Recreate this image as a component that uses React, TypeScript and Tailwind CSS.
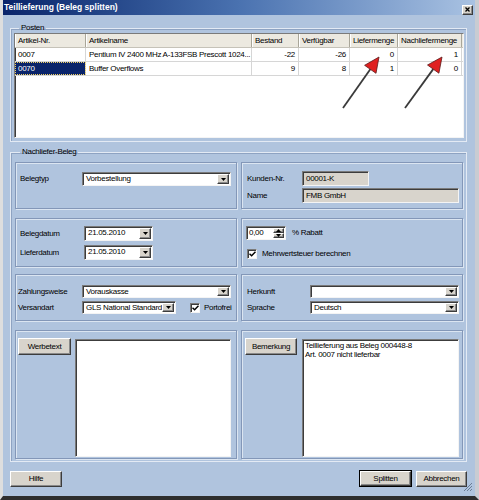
import React from "react";

const sunken =
  "border border-t-[#7a7a7a] border-l-[#7a7a7a] border-b-[#f4f4f4] border-r-[#f4f4f4] shadow-[inset_1px_1px_0_#3c3c3c]";
const raised =
  "bg-[#d8d4cc] border border-t-[#ffffff] border-l-[#ffffff] border-b-[#3c3c3c] border-r-[#3c3c3c] shadow-[inset_-1px_-1px_0_#8a8a8a]";
const panel =
  "border border-[#8397b8] shadow-[inset_1px_1px_0_#dbe5f1,1px_1px_0_#dbe5f1]";

function DropBtn() {
  return (
    <div className={`${raised} w-[12px] my-[1px] mr-[1px] flex items-center justify-center`}>
      <svg width="5" height="3" viewBox="0 0 5 3">
        <path d="M0 0H5L2.5 3Z" fill="#000" />
      </svg>
    </div>
  );
}

function Combo({ className, value }: { className: string; value?: string }) {
  return (
    <div className={`${sunken} bg-white flex items-stretch ${className}`}>
      <span className="flex-1 pl-[3px] leading-[12px] whitespace-nowrap overflow-hidden">{value}</span>
      <DropBtn />
    </div>
  );
}

function Check({ className }: { className?: string }) {
  return (
    <div className={`${sunken} bg-white w-[10px] h-[10px] flex items-center justify-center ${className ?? ""}`}>
      <svg width="7" height="6" viewBox="0 0 7 6">
        <path d="M0.5 2.8L2.6 4.8L6.5 0.8" stroke="#000" strokeWidth="1.5" fill="none" />
      </svg>
    </div>
  );
}

function Btn({ children, className }: { children: React.ReactNode; className: string }) {
  return (
    <div className={`${raised} flex items-center justify-center leading-none ${className}`}>{children}</div>
  );
}

const cols = [
  { w: "w-[71px]", h: "Artikel-Nr.", right: false },
  { w: "w-[166px]", h: "Artikelname", right: false },
  { w: "w-[47px]", h: "Bestand", right: true },
  { w: "w-[51px]", h: "Verfügbar", right: true },
  { w: "w-[48px]", h: "Liefermenge", right: true },
  { w: "w-[64px]", h: "Nachliefermenge", right: true },
];

const rows = [
  ["0007", "Pentium IV 2400 MHz A-133FSB Prescott 1024...", "-22", "-26", "0", "1"],
  ["0070", "Buffer Overflows", "9", "8", "1", "0"],
];

export default function App() {
  return (
    <div className="relative w-[479px] h-[500px] overflow-hidden bg-[#d4d0c8] font-['Liberation_Sans',Arial,sans-serif] text-[8px] tracking-[-0.3px] text-black">
      <div className="flex flex-col w-[479px] h-[500px] border-l-[3px] border-l-[#dedede] border-r-[4px] border-r-[#c9ccd2] border-b-[4px] border-b-[#2e2e2e] bg-[#b0c4de]">
        {/* Title bar */}
        <div className="h-[15px] flex items-center justify-between bg-gradient-to-r from-[#0a246a] via-[#4a72b0] to-[#a9c2e2] pl-[1px] pr-[2px]">
          <span className="text-white font-bold text-[8.5px] tracking-[0px]">Teillieferung (Beleg splitten)</span>
          <div className={`${raised} w-[11px] h-[10px] mt-[4px] flex items-center justify-center`}>
            <svg width="5" height="5" viewBox="0 0 5 5">
              <path d="M0.5 0.5L4.5 4.5M4.5 0.5L0.5 4.5" stroke="#000" strokeWidth="1.3" />
            </svg>
          </div>
        </div>

        <div className="flex flex-col pl-[7px] pr-[8px]">
          {/* Posten */}
          <fieldset className="mt-[8px] border border-[#e3eaf4] shadow-[inset_1px_1px_0_#8ea3c2] px-[3px] pb-[3px] pr-[2px]">
            <legend className="ml-[5px] px-[2px] leading-[10px]">Posten</legend>
            <div className={`h-[105px] bg-white ${sunken}`}>
              <div className="flex h-[14px] bg-[#ece9e0] border-b border-[#c5c2b8]">
                {cols.map((c) => (
                  <div
                    key={c.h}
                    className={`${c.w} flex items-center pl-[3px] border-r border-r-[#a9a699] shadow-[inset_1px_0_0_#ffffff] whitespace-nowrap overflow-hidden`}
                  >
                    {c.h}
                  </div>
                ))}
              </div>
              {rows.map((r, ri) => (
                <div key={ri} className="flex h-[14px] border-b border-[#d6d6d6]">
                  {r.map((v, ci) => {
                    const c = cols[ci];
                    const sel = ri === 1 && ci === 0;
                    return (
                      <div
                        key={ci}
                        className={`${c.w} flex items-center border-r border-r-[#d6d6d6] whitespace-nowrap overflow-hidden ${
                          c.right ? "justify-end pr-[3px]" : "pl-[3px]"
                        } ${sel ? "bg-[#0a246a] text-white outline-1 outline-dotted outline-[#f0d060] -outline-offset-1" : ""}`}
                      >
                        {v}
                      </div>
                    );
                  })}
                </div>
              ))}
            </div>
          </fieldset>

          {/* Nachliefer-Beleg */}
          <fieldset className="mt-[5px] border border-[#e3eaf4] shadow-[inset_1px_1px_0_#8ea3c2] pl-[4px] pr-[3px] pb-[2px]">
            <legend className="ml-[5px] px-[2px] leading-[10px]">Nachliefer-Beleg</legend>
            <div className="mt-[5px] grid grid-cols-[222px_222px] gap-x-[4px]">
              {/* Row 1 */}
              <div className={`${panel} h-[47px] pl-[4px] pt-[9px]`}>
                <div className="flex items-center">
                  <span className="w-[62px]">Belegtyp</span>
                  <Combo className="w-[149px] h-[14px]" value="Vorbestellung" />
                </div>
              </div>
              <div className={`${panel} h-[47px] pl-[5px] pt-[8px] flex flex-col gap-[2px]`}>
                <div className="flex items-center">
                  <span className="w-[55px]">Kunden-Nr.</span>
                  <div className={`${sunken} bg-[#d8d4cc] w-[67px] h-[15px] pl-[3px] leading-[13px]`}>00001-K</div>
                </div>
                <div className="flex items-center">
                  <span className="w-[55px]">Name</span>
                  <div className={`${sunken} bg-[#d8d4cc] w-[157px] h-[15px] pl-[3px] leading-[13px]`}>FMB GmbH</div>
                </div>
              </div>

              {/* Row 2 */}
              <div className={`${panel} mt-[9px] h-[49px] pl-[4px] pt-[7px] flex flex-col gap-[4px]`}>
                <div className="flex items-center">
                  <span className="w-[64px]">Belegdatum</span>
                  <Combo className="w-[69px] h-[15px]" value="21.05.2010" />
                </div>
                <div className="flex items-center">
                  <span className="w-[64px]">Lieferdatum</span>
                  <Combo className="w-[69px] h-[15px]" value="21.05.2010" />
                </div>
              </div>
              <div className={`${panel} mt-[9px] h-[49px] pl-[4px] pt-[7px] flex flex-col gap-[8px]`}>
                <div className="flex items-center">
                  <div className={`${sunken} bg-white w-[40px] h-[14px] flex items-stretch`}>
                    <span className="flex-1 pl-[2px] leading-[12px]">0,00</span>
                    <div className="w-[11px] flex flex-col my-[1px] mr-[1px]">
                      <div className={`${raised} flex-1 flex items-center justify-center`}>
                        <svg width="5" height="3" viewBox="0 0 5 3"><path d="M0 3H5L2.5 0Z" fill="#000" /></svg>
                      </div>
                      <div className={`${raised} flex-1 flex items-center justify-center`}>
                        <svg width="5" height="3" viewBox="0 0 5 3"><path d="M0 0H5L2.5 3Z" fill="#000" /></svg>
                      </div>
                    </div>
                  </div>
                  <span className="ml-[6px]">% Rabatt</span>
                </div>
                <div className="flex items-center">
                  <Check className="ml-[1px]" />
                  <span className="ml-[5px]">Mehrwertsteuer berechnen</span>
                </div>
              </div>

              {/* Row 3 */}
              <div className={`${panel} mt-[7px] h-[47px] pl-[2px] pt-[10px] flex flex-col gap-[3px]`}>
                <div className="flex items-center">
                  <span className="w-[64px]">Zahlungsweise</span>
                  <Combo className="w-[149px] h-[13px]" value="Vorauskasse" />
                </div>
                <div className="flex items-center">
                  <span className="w-[64px]">Versandart</span>
                  <Combo className="w-[94px] h-[13px]" value="GLS National Standardp" />
                  <Check className="ml-[14px]" />
                  <span className="ml-[4px]">Portofrei</span>
                </div>
              </div>
              <div className={`${panel} mt-[7px] h-[47px] pl-[5px] pt-[10px] flex flex-col gap-[3px]`}>
                <div className="flex items-center">
                  <span className="w-[63px]">Herkunft</span>
                  <Combo className="w-[149px] h-[13px]" value="" />
                </div>
                <div className="flex items-center">
                  <span className="w-[63px]">Sprache</span>
                  <Combo className="w-[149px] h-[13px]" value="Deutsch" />
                </div>
              </div>

              {/* Row 4 */}
              <div className={`${panel} mt-[9px] h-[129px] pl-[2px] pt-[6px] flex items-start`}>
                <Btn className="w-[53px] h-[17px] mt-[1px]">Werbetext</Btn>
                <div className={`${sunken} bg-white ml-[4px] mt-[2px] w-[156px] h-[118px]`} />
              </div>
              <div className={`${panel} mt-[9px] h-[129px] pl-[3px] pt-[6px] flex items-start`}>
                <Btn className="w-[52px] h-[17px] mt-[1px]">Bemerkung</Btn>
                <div className={`${sunken} bg-white ml-[5px] mt-[2px] w-[157px] h-[118px] pl-[2px] pt-[1px] leading-[9px]`}>
                  <div>Teillieferung aus Beleg 000448-8</div>
                  <div>Art. 0007 nicht lieferbar</div>
                </div>
              </div>
            </div>
          </fieldset>

          {/* Bottom buttons */}
          <div className="mt-[8px] flex items-center">
            <Btn className="w-[52px] h-[16px]">Hilfe</Btn>
            <div className="flex-1" />
            <div className="border border-black">
              <Btn className="w-[51px] h-[15px]">Splitten</Btn>
            </div>
            <Btn className="ml-[4px] w-[51px] h-[16px]">Abbrechen</Btn>
          </div>
        </div>
      </div>

      {/* Resize grip */}
      <svg className="absolute left-[463px] top-[482px]" width="10" height="10" viewBox="0 0 10 10">
        <path d="M9 1L1 9M9 4L4 9M9 7L7 9" stroke="#6b7d95" strokeWidth="1" />
      </svg>

      {/* Annotation arrows */}
      <svg className="absolute left-0 top-0 pointer-events-none" width="479" height="500" viewBox="0 0 479 500">
        <line x1="343" y1="108" x2="370.3" y2="69.3" stroke="#3a3a3a" strokeWidth="1.8" />
        <polygon points="379,57 376,73.3 364.6,65.3" fill="#e02020" stroke="#5a1a1a" strokeWidth="0.8" />
        <line x1="405" y1="108" x2="433.2" y2="69.1" stroke="#3a3a3a" strokeWidth="1.8" />
        <polygon points="442,57 438.9,73.2 427.5,65" fill="#e02020" stroke="#5a1a1a" strokeWidth="0.8" />
      </svg>
    </div>
  );
}
